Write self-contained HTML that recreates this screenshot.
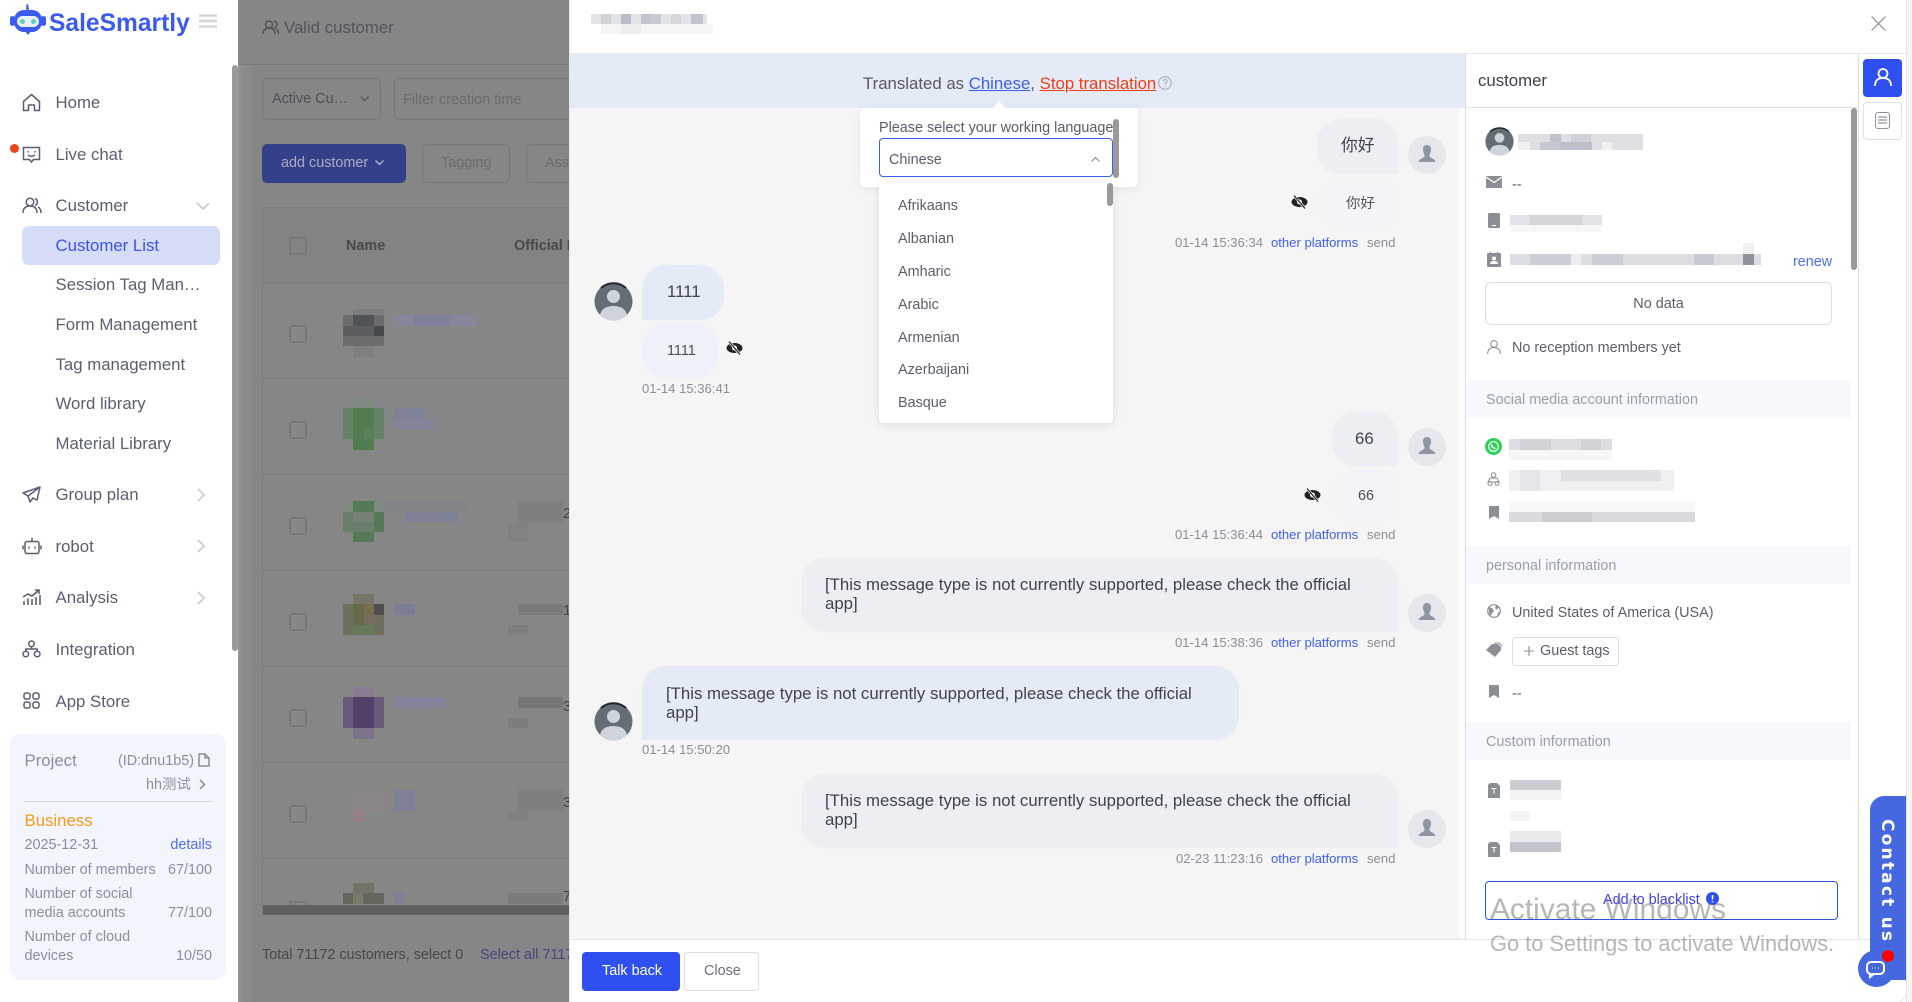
<!DOCTYPE html>
<html><head><meta charset="utf-8"><title>SaleSmartly</title>
<style>
*{box-sizing:border-box}
html,body{margin:0;padding:0;width:1912px;height:1002px;overflow:hidden;background:#fff;font-family:"Liberation Sans","Noto Sans CJK SC",sans-serif}
.t{position:absolute;white-space:nowrap;line-height:20px;font-size:16.8px;color:#5a5f6e;margin-top:1px}
.b{position:absolute}
.s{font-size:14.4px}
svg{position:absolute;overflow:visible}
.bub{position:absolute;box-shadow:0 0 8px rgba(0,0,0,.015)}
.r1{background:#eceef3;border-radius:24px 24px 0 24px}
.r2{background:#f3f4f7;border-radius:24px}
.l1{background:#e5eaf7;border-radius:24px 24px 24px 0}
.l2{background:#eef1fa;border-radius:24px}
.msg{font-size:16.8px;line-height:18.500px;color:#3f434c;position:absolute;white-space:nowrap}
.meta{position:absolute;white-space:nowrap;font-size:13.09px;line-height:16px;color:#8a8e98}
.blue{color:#3f5ef0}
.sec{position:absolute;left:1466px;width:385px;height:38px;background:#f6f8fe;font-size:14.4px;line-height:40px;color:#9a9ea8;padding-left:20px}
.opt{position:absolute;left:898px;font-size:14.4px;line-height:20px;color:#5a5e6a;margin-top:2px}
</style></head><body>

<!-- sidebar -->
<div class="b" style="left:0;top:0;width:238px;height:1002px;background:#fff"></div>
<svg style="left:8px;top:3px" width="42" height="34" viewBox="0 0 42 34">
<path d="M19 4.500q1-1.500 0-3" fill="none" stroke="#3a5af0" stroke-width="2"/>
<circle cx="19.500" cy="5.500" r="1.500" fill="#3a5af0"/>
<rect x="6" y="7" width="28" height="22" rx="10" fill="#3a5af0"/>
<path d="M17 28l3 4 3-4z" fill="#3a5af0"/>
<rect x="2" y="13" width="5" height="10" rx="2.500" fill="#3a5af0"/>
<rect x="33" y="13" width="5" height="10" rx="2.500" fill="#3a5af0"/>
<rect x="9" y="13" width="22" height="11" rx="5.500" fill="#e8f1fb"/>
<circle cx="14.500" cy="18.500" r="2.500" fill="#5fd0c0"/><circle cx="25.500" cy="18.500" r="2.500" fill="#5fd0c0"/>
</svg>
<div class="t" style="left:49px;top:9px;font-size:24.6px;line-height:28px;font-weight:bold;color:#3a5af0">SaleSmartly</div>
<svg style="left:199px;top:14px" width="18" height="14"><path d="M0 1.500h18M0 7h18M0 12.500h18" stroke="#d3d5da" stroke-width="2.500"/></svg>

<!-- nav icons -->
<svg style="left:22px;top:93px" width="19" height="19" viewBox="0 0 19 19" fill="none" stroke="#5a6070" stroke-width="1.500"><path d="M1.500 8.500L9.500 1.500l8 7V17.500h-5v-5.500h-6v5.500h-5z" stroke-linejoin="round"/></svg>
<div class="b" style="left:10px;top:144px;width:9px;height:9px;border-radius:50%;background:#f0431a"></div>
<svg style="left:22px;top:146px" width="19" height="18" viewBox="0 0 19 18" fill="none" stroke="#5a6070" stroke-width="1.500"><path d="M1.500 1.500h16v12h-6l-2 2.500-2-2.500h-6z"/><path d="M6 5v1.500M13 5v1.500"/><path d="M6 9q3.500 2.500 7 0"/></svg>
<svg style="left:22px;top:197px" width="20" height="17" viewBox="0 0 20 17" fill="none" stroke="#5a6070" stroke-width="1.500"><circle cx="8" cy="5" r="3.800"/><path d="M1 16q0-7 7-7t7 7"/><path d="M13 1.500a3.800 3.800 0 0 1 0 7M16 10q3 1.500 3 6"/></svg>
<svg style="left:22px;top:486px" width="19" height="18" viewBox="0 0 19 18" fill="none" stroke="#5a6070" stroke-width="1.500"><path d="M18 1L1 7l5 3 2 6 3-4 4 2z" stroke-linejoin="round"/><path d="M6 10L18 1"/></svg>
<svg style="left:22px;top:537px" width="20" height="18" viewBox="0 0 20 18" fill="none" stroke="#5a6070" stroke-width="1.500"><rect x="3" y="4.500" width="14" height="12" rx="2"/><path d="M10 4.500V1M1 8.500v4M19 8.500v4"/><path d="M7 9.500v2M13 9.500v2"/></svg>
<svg style="left:22px;top:589px" width="19" height="17" viewBox="0 0 19 17" fill="none" stroke="#5a6070" stroke-width="1.600"><path d="M1 8l5-3 4 2 7-6M13 1h4v4"/><path d="M2 16v-4M6 16V9.500M10 16v-6M14 16V8M18 16V6"/></svg>
<svg style="left:22px;top:640px" width="19" height="18" viewBox="0 0 19 18" fill="none" stroke="#5a6070" stroke-width="1.500"><circle cx="9.500" cy="3.800" r="2.800"/><circle cx="3.800" cy="14" r="2.800"/><circle cx="15.200" cy="14" r="2.800"/><path d="M9.500 6.500V9M3.800 11.500V9h11.400v2.500"/></svg>
<svg style="left:23px;top:692px" width="17" height="17" viewBox="0 0 17 17" fill="none" stroke="#5a6070" stroke-width="1.500"><rect x="1" y="1" width="6" height="6" rx="2"/><rect x="10" y="1" width="6" height="6" rx="2"/><rect x="1" y="10" width="6" height="6" rx="2"/><rect x="10" y="10" width="6" height="6" rx="2"/></svg>

<div class="t" style="left:55.500px;top:92px">Home</div>
<div class="t" style="left:55.500px;top:144px">Live chat</div>
<div class="t" style="left:55.500px;top:195px">Customer</div>
<svg style="left:196px;top:202px" width="14" height="8" fill="none" stroke="#c9ccd3" stroke-width="1.800"><path d="M1 1l6 6 6-6"/></svg>
<div class="b" style="left:22px;top:226px;width:198px;height:39px;background:#d6ddf8;border-radius:7px"></div>
<div class="t" style="left:55.500px;top:235px;color:#3f51f0">Customer List</div>
<div class="t" style="left:55.500px;top:274px">Session Tag Man…</div>
<div class="t" style="left:55.500px;top:314px">Form Management</div>
<div class="t" style="left:55.500px;top:354px">Tag management</div>
<div class="t" style="left:55.500px;top:393px">Word library</div>
<div class="t" style="left:55.500px;top:433px">Material Library</div>
<div class="t" style="left:55.500px;top:484px">Group plan</div>
<div class="t" style="left:55.500px;top:536px">robot</div>
<div class="t" style="left:55.500px;top:587px">Analysis</div>
<div class="t" style="left:55.500px;top:639px">Integration</div>
<div class="t" style="left:55.500px;top:691px">App Store</div>
<svg style="left:197px;top:488px" width="8" height="14" fill="none" stroke="#c9ccd3" stroke-width="1.800"><path d="M1 1l6 6-6 6"/></svg>
<svg style="left:197px;top:539px" width="8" height="14" fill="none" stroke="#c9ccd3" stroke-width="1.800"><path d="M1 1l6 6-6 6"/></svg>
<svg style="left:197px;top:591px" width="8" height="14" fill="none" stroke="#c9ccd3" stroke-width="1.800"><path d="M1 1l6 6-6 6"/></svg>
<div class="b" style="left:232px;top:65px;width:6px;height:586px;background:#999;border-radius:3px"></div>

<!-- project card -->
<div class="b" style="left:10px;top:734px;width:216px;height:246px;background:#f2f5fe;border-radius:10px"></div>
<div class="t" style="left:24.500px;top:750px;color:#8a8f9c">Project</div>
<div class="t s" style="right:1718px;top:750px;color:#8a8f9c">(ID:dnu1b5)</div>
<svg style="left:198px;top:753px" width="12" height="14" fill="none" stroke="#8a8f9c" stroke-width="1.500"><path d="M1 1h6l4 4v8H1z"/><path d="M7 1v4h4"/></svg>
<div class="t s" style="left:146px;top:774px;color:#8a8f9c">hh测试</div>
<svg style="left:199px;top:779px" width="7" height="11" fill="none" stroke="#80848f" stroke-width="1.400"><path d="M1 1l4.500 4.500L1 10"/></svg>
<div class="b" style="left:24px;top:801px;width:188px;height:1px;background:#d5d8df"></div>
<div class="t" style="left:24.500px;top:810px;color:#f59a16">Business</div>
<div class="t s" style="left:24.500px;top:834px;color:#8a8f9c">2025-12-31</div>
<div class="t s" style="right:1700px;top:834px;color:#4f6ef7">details</div>
<div class="t s" style="left:24.500px;top:859px;color:#8a8f9c">Number of members</div>
<div class="t s" style="right:1700px;top:859px;color:#8a8f9c">67/100</div>
<div class="t s" style="left:24.500px;top:883px;color:#8a8f9c">Number of social</div>
<div class="t s" style="left:24.500px;top:902px;color:#8a8f9c">media accounts</div>
<div class="t s" style="right:1700px;top:902px;color:#8a8f9c">77/100</div>
<div class="t s" style="left:24.500px;top:926px;color:#8a8f9c">Number of cloud</div>
<div class="t s" style="left:24.500px;top:945px;color:#8a8f9c">devices</div>
<div class="t s" style="right:1700px;top:945px;color:#8a8f9c">10/50</div>

<!-- dimmed page -->
<div class="b" style="left:238px;top:0;width:332px;height:1002px;background:linear-gradient(90deg,#95979a 0,#8b8c8e 4px,#888 12px,#868686 14px)"></div>
<div class="b" style="left:238px;top:0;width:332px;height:64px;background:#868686"></div>
<div class="b" style="left:238px;top:64px;width:332px;height:1px;background:#797979"></div>
<svg style="left:262px;top:20px" width="17" height="15" fill="none" stroke="#505358" stroke-width="1.400"><circle cx="7" cy="4.500" r="3.500"/><path d="M1 14q0-6 6-6t6 6"/><path d="M11.500 1a3.500 3.500 0 0 1 0 7M14 9q2.500 1.500 2.500 5"/></svg>
<div class="t" style="left:284px;top:17px;color:#505560">Valid customer</div>
<div class="b" style="left:262px;top:78px;width:119px;height:42px;border:1px solid #787878;border-radius:5px"></div>
<div class="t s" style="left:272px;top:88px;color:#4e5159">Active Cu…</div>
<svg style="left:360px;top:96px" width="9" height="6" fill="none" stroke="#4e5159" stroke-width="1.200"><path d="M.5.500l4 4 4-4"/></svg>
<div class="b" style="left:394px;top:78px;width:200px;height:42px;border:1px solid #787878;border-radius:5px"></div>
<div class="t s" style="left:403px;top:89px;color:#6c6c6c">Filter creation time</div>
<div class="b" style="left:262px;top:144px;width:144px;height:39px;background:#344088;border-radius:5px"></div>
<div class="t s" style="left:281px;top:152px;color:#a9acc3">add customer</div>
<svg style="left:375px;top:160px" width="9" height="6" fill="none" stroke="#b9bcd0" stroke-width="1.300"><path d="M.5.500l4 4 4-4"/></svg>
<div class="b" style="left:422px;top:144px;width:88px;height:39px;border:1px solid #787878;border-radius:5px"></div>
<div class="t s" style="left:441px;top:152px;color:#6e6e6e">Tagging</div>
<div class="b" style="left:526px;top:144px;width:88px;height:39px;border:1px solid #787878;border-radius:5px"></div>
<div class="t s" style="left:545px;top:152px;color:#6e6e6e">Assign</div>

<div class="b" style="left:262px;top:207px;width:320px;height:709px;border:1px solid #7d7d7d;border-bottom:0"></div>
<div class="b" style="left:263px;top:208px;width:320px;height:75px;background:#838383"></div>
<div class="b" style="left:262px;top:283px;width:320px;height:1px;background:#7c7c7c"></div>
<div class="b" style="left:262px;top:378px;width:320px;height:1px;background:#7c7c7c"></div>
<div class="b" style="left:262px;top:474px;width:320px;height:1px;background:#7c7c7c"></div>
<div class="b" style="left:262px;top:570px;width:320px;height:1px;background:#7c7c7c"></div>
<div class="b" style="left:262px;top:666px;width:320px;height:1px;background:#7c7c7c"></div>
<div class="b" style="left:262px;top:762px;width:320px;height:1px;background:#7c7c7c"></div>
<div class="b" style="left:262px;top:858px;width:320px;height:1px;background:#7c7c7c"></div>
<div class="b" style="left:289px;top:237px;width:18px;height:18px;border:2px solid #777;border-radius:3px"></div>
<div class="t s" style="left:346px;top:235px;font-weight:bold;color:#4a4a4a">Name</div>
<div class="t s" style="left:514px;top:235px;font-weight:bold;color:#4a4a4a">Official IDs</div>
<div class="b" style="left:289px;top:325px;width:18px;height:18px;border:2px solid #777;border-radius:3px"></div>
<div class="b" style="left:289px;top:421px;width:18px;height:18px;border:2px solid #777;border-radius:3px"></div>
<div class="b" style="left:289px;top:517px;width:18px;height:18px;border:2px solid #777;border-radius:3px"></div>
<div class="b" style="left:289px;top:613px;width:18px;height:18px;border:2px solid #777;border-radius:3px"></div>
<div class="b" style="left:289px;top:709px;width:18px;height:18px;border:2px solid #777;border-radius:3px"></div>
<div class="b" style="left:289px;top:805px;width:18px;height:18px;border:2px solid #777;border-radius:3px"></div>
<div class="b" style="left:289px;top:901px;width:18px;height:4px;border:2px solid #777;border-bottom:0"></div>

<svg style="left:0;top:0" width="600" height="920">
<!-- row 1 -->
<g><rect x="353" y="309" width="31" height="6" fill="#7c7c7c"/><rect x="343" y="315" width="41" height="31" fill="#6a6c6e"/><rect x="353" y="315" width="21" height="11" fill="#505357"/><rect x="343" y="326" width="31" height="10" fill="#5b5d61"/><rect x="374" y="326" width="10" height="10" fill="#46494d"/><rect x="353" y="346" width="21" height="11" fill="#7e7e7e"/><rect x="394" y="315" width="83" height="11" fill="#85869a"/><rect x="414" y="315" width="35" height="11" fill="#7e8099"/></g>
<!-- row 2 -->
<g><rect x="353" y="398" width="21" height="10" fill="#7f8a80"/><rect x="343" y="408" width="41" height="31" fill="#668267"/><rect x="353" y="408" width="21" height="42" fill="#527d53"/><rect x="364" y="429" width="10" height="10" fill="#5a8259"/><rect x="394" y="408" width="31" height="11" fill="#7f8198"/><rect x="394" y="419" width="42" height="10" fill="#83849a"/></g>
<!-- row 3 -->
<g><rect x="353" y="501" width="21" height="41" fill="#567a57"/><rect x="343" y="512" width="41" height="20" fill="#6a806c"/><rect x="353" y="512" width="21" height="10" fill="#748375"/><rect x="374" y="512" width="10" height="20" fill="#567a58"/><rect x="343" y="501" width="10" height="11" fill="#7e8a80"/><rect x="374" y="501" width="10" height="11" fill="#7e8a80"/><rect x="384" y="501" width="83" height="11" fill="#828389"/><rect x="405" y="512" width="52" height="10" fill="#7e8096"/><rect x="518" y="501" width="45" height="21" fill="#7f7f7f"/><rect x="508" y="522" width="20" height="20" fill="#818181"/></g>
<!-- row 4 -->
<g><rect x="353" y="594" width="21" height="10" fill="#777568"/><rect x="343" y="604" width="41" height="31" fill="#6f6f5f"/><rect x="353" y="604" width="21" height="31" fill="#66694a"/><rect x="364" y="604" width="10" height="11" fill="#7a6e4e"/><rect x="374" y="604" width="10" height="11" fill="#4f4f4f"/><rect x="364" y="615" width="10" height="10" fill="#786c5c"/><rect x="353" y="625" width="21" height="10" fill="#657a58"/><rect x="394" y="604" width="21" height="11" fill="#7b7d94"/><rect x="518" y="604" width="45" height="11" fill="#7a7a7a"/><rect x="508" y="625" width="20" height="10" fill="#7e7e7e"/></g>
<!-- row 5 -->
<g><rect x="353" y="687" width="21" height="10" fill="#887c90"/><rect x="343" y="697" width="41" height="31" fill="#675a7a"/><rect x="353" y="697" width="21" height="31" fill="#524069"/><rect x="353" y="728" width="21" height="11" fill="#7c7388"/><rect x="394" y="697" width="52" height="11" fill="#83849a"/><rect x="518" y="697" width="45" height="11" fill="#767676"/><rect x="508" y="718" width="20" height="10" fill="#7d7d7d"/></g>
<!-- row 6 -->
<g><rect x="353" y="790" width="31" height="21" fill="#8c8689"/><rect x="353" y="811" width="10" height="10" fill="#977f88"/><rect x="394" y="790" width="21" height="21" fill="#7e8099"/><rect x="518" y="790" width="45" height="21" fill="#7e807e"/><rect x="508" y="811" width="20" height="10" fill="#808080"/></g>
<!-- row 7 -->
<g><rect x="353" y="883" width="21" height="10" fill="#757268"/><rect x="343" y="893" width="41" height="11" fill="#65675f"/><rect x="353" y="893" width="10" height="11" fill="#7a7a68"/><rect x="394" y="893" width="10" height="11" fill="#7f8098"/><rect x="508" y="893" width="55" height="11" fill="#7b7b7b"/></g>
</svg>
<div class="t s" style="left:563px;top:503px;color:#444">25</div>
<div class="t s" style="left:563px;top:600px;color:#444">1</div>
<div class="t s" style="left:563px;top:696px;color:#444">32</div>
<div class="t s" style="left:563px;top:792px;color:#444">30</div>
<div class="t s" style="left:563px;top:886px;color:#444">75</div>
<div class="b" style="left:263px;top:905px;width:320px;height:10px;background:#5f5f5f"></div>
<div class="t s" style="left:262px;top:944px;color:#47484e">Total 71172 customers, select 0</div>
<div class="t s" style="left:480px;top:944px;color:#45487e">Select all 71172</div>

<!-- modal -->
<div class="b" style="left:570px;top:0;width:1336px;height:1002px;background:#fff;border-radius:0 0 10px 0;box-shadow:0 0 0 1px #e6e6e6"></div>
<div class="b" style="left:1906px;top:0;width:6px;height:1002px;background:#f5f5f5;border-left:1px solid #e6e6e6"></div>
<svg style="left:591px;top:12px" width="140" height="24">
<rect x="0" y="2" width="116" height="10" fill="#e2e3e7"/><rect x="10" y="2" width="10" height="10" fill="#d0d2d8"/><rect x="30" y="2" width="10" height="10" fill="#b9bcc5"/><rect x="50" y="2" width="10" height="10" fill="#c0c3cb"/><rect x="60" y="2" width="10" height="10" fill="#c8cad1"/><rect x="80" y="2" width="10" height="10" fill="#d5d7dc"/><rect x="100" y="2" width="12" height="10" fill="#c0c3cb"/><rect x="10" y="12" width="112" height="10" fill="#f5f5f7"/><rect x="30" y="12" width="20" height="10" fill="#eeeef1"/>
</svg>
<svg style="left:1871px;top:16px" width="15" height="15" fill="none" stroke="#8e8e8e" stroke-width="1.200"><path d="M.5.500l14 14M14.500.500l-14 14"/></svg>
<div class="b" style="left:570px;top:53px;width:1336px;height:1px;background:#e6e6e8"></div>

<!-- chat -->
<div class="b" style="left:570px;top:54px;width:896px;height:885px;background:#f5f5f5"></div>
<div class="b" style="left:1459px;top:108px;width:7px;height:831px;background:#fbfbfb"></div>
<div class="b" style="left:570px;top:54px;width:896px;height:54px;background:#e5eaf7"></div>
<div class="t" style="left:863px;top:73px;color:#555a64">Translated as <u style="color:#3f5ef0">Chinese</u>, <u style="color:#f23c14">Stop translation</u></div>
<svg style="left:1158px;top:76px" width="14" height="14" fill="none" stroke="#a5a8af" stroke-width="1"><circle cx="7" cy="7" r="6.300"/><path d="M5 5.500q.3-2 2.100-2 2 0 2 1.800c0 1.500-2 1.500-2 3.200M7.100 10v1"/></svg>

<!-- message 1 -->
<div class="bub r1" style="left:1317px;top:119px;width:81px;height:55px"></div>
<div class="msg" style="left:1341px;top:137px">你好</div>
<div class="bub r2" style="left:1320px;top:180px;width:78px;height:51px"></div>
<div class="msg" style="left:1346px;top:195px;font-size:14.4px;color:#555">你好</div>
<svg style="left:1291px;top:195px" width="17" height="14" viewBox="0 0 17 14"><ellipse cx="8.500" cy="7" rx="8" ry="5" fill="#222"/><circle cx="8.500" cy="7" r="2.500" fill="#f5f5f5"/><path d="M3 .5L14 13.500" stroke="#f5f5f5" stroke-width="2.600"/><path d="M3 .5L14 13.500" stroke="#222" stroke-width="1.200"/></svg>
<div class="meta" style="left:1175px;top:235px">01-14 15:36:34</div><div class="meta blue" style="left:1271px;top:235px">other platforms</div><div class="meta" style="left:1367px;top:235px">send</div>

<!-- message 2 -->
<svg style="left:594px;top:282px" width="39" height="39" viewBox="0 0 39 39"><circle cx="19.500" cy="19.500" r="19" fill="#646c76"/><path d="M7 6a19 19 0 0 1 25 0" fill="none" stroke="#1e2730" stroke-width="2"/><circle cx="19.500" cy="14.500" r="6.500" fill="#cfd3da"/><path d="M6 33q2-9 13.500-9T33 33q-6 5.700-13.500 5.700T6 33z" fill="#cfd3da"/></svg>
<div class="bub l1" style="left:642px;top:265px;width:82px;height:55px"></div>
<div class="msg" style="left:667px;top:283px">1111</div>
<div class="bub l2" style="left:642px;top:324px;width:77px;height:54px"></div>
<div class="msg" style="left:667px;top:342px;font-size:14.4px;color:#4a4e56">1111</div>
<svg style="left:726px;top:341px" width="17" height="14" viewBox="0 0 17 14"><ellipse cx="8.500" cy="7" rx="8" ry="5" fill="#222"/><circle cx="8.500" cy="7" r="2.500" fill="#f5f5f5"/><path d="M3 .5L14 13.500" stroke="#f5f5f5" stroke-width="2.600"/><path d="M3 .5L14 13.500" stroke="#222" stroke-width="1.200"/></svg>
<div class="meta" style="left:642px;top:381px">01-14 15:36:41</div>

<!-- message 3 -->
<div class="bub r1" style="left:1332px;top:412px;width:66px;height:54px"></div>
<div class="msg" style="left:1355px;top:430px">66</div>
<div class="bub r2" style="left:1335px;top:470px;width:63px;height:53px"></div>
<div class="msg" style="left:1358px;top:487px;font-size:14.4px;color:#4a4e56">66</div>
<svg style="left:1304px;top:488px" width="17" height="14" viewBox="0 0 17 14"><ellipse cx="8.500" cy="7" rx="8" ry="5" fill="#222"/><circle cx="8.500" cy="7" r="2.500" fill="#f5f5f5"/><path d="M3 .5L14 13.500" stroke="#f5f5f5" stroke-width="2.600"/><path d="M3 .5L14 13.500" stroke="#222" stroke-width="1.200"/></svg>
<div class="meta" style="left:1175px;top:527px">01-14 15:36:44</div><div class="meta blue" style="left:1271px;top:527px">other platforms</div><div class="meta" style="left:1367px;top:527px">send</div>

<!-- message 4 -->
<div class="bub r1" style="left:801px;top:558px;width:597px;height:74px"></div>
<div class="msg" style="left:825px;top:576px">[This message type is not currently supported, please check the official<br>app]</div>
<div class="meta" style="left:1175px;top:635px">01-14 15:38:36</div><div class="meta blue" style="left:1271px;top:635px">other platforms</div><div class="meta" style="left:1367px;top:635px">send</div>

<!-- message 5 -->
<svg style="left:594px;top:702px" width="39" height="39" viewBox="0 0 39 39"><circle cx="19.500" cy="19.500" r="19" fill="#646c76"/><path d="M7 6a19 19 0 0 1 25 0" fill="none" stroke="#1e2730" stroke-width="2"/><circle cx="19.500" cy="14.500" r="6.500" fill="#cfd3da"/><path d="M6 33q2-9 13.500-9T33 33q-6 5.700-13.500 5.700T6 33z" fill="#cfd3da"/></svg>
<div class="bub l1" style="left:642px;top:666px;width:597px;height:74px"></div>
<div class="msg" style="left:666px;top:685px">[This message type is not currently supported, please check the official<br>app]</div>
<div class="meta" style="left:642px;top:742px">01-14 15:50:20</div>

<!-- message 6 -->
<div class="bub r1" style="left:801px;top:774px;width:597px;height:74px"></div>
<div class="msg" style="left:825px;top:792px">[This message type is not currently supported, please check the official<br>app]</div>
<div class="meta" style="left:1176px;top:851px">02-23 11:23:16</div><div class="meta blue" style="left:1271px;top:851px">other platforms</div><div class="meta" style="left:1367px;top:851px">send</div>

<!-- person avatars -->
<svg style="left:1408px;top:136px" width="38" height="38" viewBox="0 0 38 38"><circle cx="19" cy="19" r="19" fill="#e5e7ec"/><path d="M19 9c3 0 4.200 2.200 4 5-.2 2.500-1.500 4-1.500 6 0 2 5.500 2.500 6 6H10.500c.5-3.500 6-4 6-6 0-2-1.300-3.500-1.500-6-.2-2.800 1-5 4-5z" fill="#8f96a3"/></svg>
<svg style="left:1408px;top:428px" width="38" height="38" viewBox="0 0 38 38"><circle cx="19" cy="19" r="19" fill="#e5e7ec"/><path d="M19 9c3 0 4.200 2.200 4 5-.2 2.500-1.500 4-1.500 6 0 2 5.500 2.500 6 6H10.500c.5-3.500 6-4 6-6 0-2-1.300-3.500-1.500-6-.2-2.800 1-5 4-5z" fill="#8f96a3"/></svg>
<svg style="left:1408px;top:594px" width="38" height="38" viewBox="0 0 38 38"><circle cx="19" cy="19" r="19" fill="#e5e7ec"/><path d="M19 9c3 0 4.200 2.200 4 5-.2 2.500-1.500 4-1.500 6 0 2 5.500 2.500 6 6H10.500c.5-3.500 6-4 6-6 0-2-1.300-3.500-1.500-6-.2-2.800 1-5 4-5z" fill="#8f96a3"/></svg>
<svg style="left:1408px;top:810px" width="38" height="38" viewBox="0 0 38 38"><circle cx="19" cy="19" r="19" fill="#e5e7ec"/><path d="M19 9c3 0 4.200 2.200 4 5-.2 2.500-1.500 4-1.500 6 0 2 5.500 2.500 6 6H10.500c.5-3.500 6-4 6-6 0-2-1.300-3.500-1.500-6-.2-2.800 1-5 4-5z" fill="#8f96a3"/></svg>

<!-- popover -->
<div class="b" style="left:860px;top:108px;width:278px;height:79px;background:#fff;border-radius:5px;box-shadow:0 2px 10px rgba(0,0,0,.06)"></div>
<svg style="left:992px;top:101px" width="14" height="8"><path d="M0 8L7 0l7 8z" fill="#fff"/></svg>
<div class="t s" style="left:879px;top:117px;color:#5a5e6a">Please select your working language</div>
<div class="b" style="left:879px;top:138px;width:234px;height:39px;border:1px solid #3f5ef0;border-radius:4px;background:#fff"></div>
<div class="t s" style="left:889px;top:149px;color:#5a5e6a">Chinese</div>
<svg style="left:1091px;top:156px" width="9" height="6" fill="none" stroke="#8a8e98" stroke-width="1.200"><path d="M.5 5.500l4-4 4 4"/></svg>
<div class="b" style="left:1113px;top:119px;width:6px;height:59px;background:#999;border-radius:3px"></div>
<div class="b" style="left:879px;top:183px;width:234px;height:240px;background:#fff;border-radius:4px;box-shadow:0 2px 10px rgba(0,0,0,.1)"></div>
<div class="b" style="left:1107px;top:183px;width:6px;height:23px;background:#999;border-radius:3px"></div>
<div class="opt" style="top:194px">Afrikaans</div>
<div class="opt" style="top:227px">Albanian</div>
<div class="opt" style="top:260px">Amharic</div>
<div class="opt" style="top:293px">Arabic</div>
<div class="opt" style="top:326px">Armenian</div>
<div class="opt" style="top:358px">Azerbaijani</div>
<div class="opt" style="top:391px">Basque</div>

<!-- footer -->
<div class="b" style="left:570px;top:939px;width:1300px;height:1px;background:#e3e3e5"></div>
<div class="b" style="left:582px;top:952px;width:98px;height:39px;background:#2f4ff0;border-radius:4px"></div>
<div class="t s" style="left:602px;top:960px;color:#fff">Talk back</div>
<div class="b" style="left:684px;top:952px;width:75px;height:39px;background:#fff;border:1px solid #dcdde1;border-radius:4px"></div>
<div class="t s" style="left:704px;top:960px;color:#6a6e78">Close</div>

<!-- customer panel -->
<div class="b" style="left:1465px;top:54px;width:1px;height:885px;background:#dcdde0"></div>
<div class="b" style="left:1466px;top:54px;width:392px;height:885px;background:#fff"></div>
<div class="b" style="left:1858px;top:54px;width:1px;height:885px;background:#dcdde0"></div>
<div class="b" style="left:1466px;top:107px;width:392px;height:1px;background:#dfe0e3"></div>
<div class="t" style="left:1478px;top:70px;color:#3d4048">customer</div>
<div class="b" style="left:1851px;top:108px;width:6px;height:162px;background:#999;border-radius:3px"></div>

<div class="b" style="left:1863px;top:59px;width:39px;height:38px;background:#2f4ff0;border-radius:4px"></div>
<svg style="left:1874px;top:68px" width="18" height="19" fill="none" stroke="#fff" stroke-width="1.800"><circle cx="9" cy="5.500" r="4.500"/><path d="M1 18q0-8 8-8t8 8"/></svg>
<div class="b" style="left:1863px;top:102px;width:39px;height:38px;border:1px solid #dfe0e3;border-radius:4px"></div>
<svg style="left:1875px;top:112px" width="15" height="17" fill="none" stroke="#8e929c" stroke-width="1"><rect x=".5" y=".5" width="14" height="16" rx="2.500"/><path d="M3 5h9M3 8h9M3 11h9" stroke-width="1.200"/></svg>

<svg style="left:1485px;top:127px" width="29" height="29" viewBox="0 0 39 39"><circle cx="19.500" cy="19.500" r="19" fill="#646c76"/><path d="M7 6a19 19 0 0 1 25 0" fill="none" stroke="#1e2730" stroke-width="2"/><circle cx="19.500" cy="14.500" r="6.500" fill="#cfd3da"/><path d="M6 33q2-9 13.500-9T33 33q-6 5.700-13.500 5.700T6 33z" fill="#cfd3da"/></svg>

<svg style="left:1466px;top:108px" width="392" height="831">
<!-- name mosaic -->
<rect x="52" y="26" width="125" height="16" fill="#dddfe3"/><rect x="84" y="26" width="11" height="8" fill="#bfc2ca"/><rect x="105" y="26" width="20" height="8" fill="#cfd1d7"/><rect x="52" y="34" width="12" height="8" fill="#eeeff1"/><rect x="74" y="34" width="20" height="8" fill="#c5c8cf"/><rect x="94" y="34" width="32" height="8" fill="#bdc0c9"/><rect x="136" y="34" width="10" height="8" fill="#f0f0f2"/>
<rect x="44" y="107" width="92" height="10" fill="#e2e3e7"/><rect x="64" y="107" width="52" height="10" fill="#d3d5d9"/><rect x="44" y="117" width="92" height="7" fill="#f7f7f8"/>
<rect x="44" y="146" width="251" height="11" fill="#dcdde1"/><rect x="64" y="146" width="41" height="11" fill="#cbced4"/><rect x="126" y="146" width="31" height="11" fill="#cbced4"/><rect x="228" y="146" width="20" height="11" fill="#c8cad1"/><rect x="105" y="146" width="10" height="11" fill="#eceded"/><rect x="277" y="135" width="11" height="11" fill="#f0f0f1"/><rect x="277" y="146" width="11" height="11" fill="#8f9298"/>
<rect x="43" y="331" width="103" height="11" fill="#dcdde1"/><rect x="54" y="331" width="31" height="11" fill="#d0d2d7"/><rect x="115" y="331" width="20" height="11" fill="#d0d2d7"/><rect x="43" y="342" width="103" height="10" fill="#f6f6f7"/>
<rect x="43" y="362" width="165" height="21" fill="#f0f0f2"/><rect x="95" y="362" width="100" height="11" fill="#dfe0e4"/><rect x="54" y="362" width="20" height="21" fill="#e4e5e8"/>
<rect x="43" y="404" width="186" height="10" fill="#d8dadf"/><rect x="76" y="404" width="50" height="10" fill="#cbcdd3"/><rect x="43" y="393" width="186" height="11" fill="#f7f7f8"/>
<rect x="44" y="672" width="51" height="10" fill="#cbcdd3"/><rect x="44" y="682" width="51" height="10" fill="#f3f3f5"/><rect x="44" y="703" width="20" height="10" fill="#f5f5f7"/><rect x="44" y="723" width="51" height="11" fill="#e8e9eb"/><rect x="44" y="734" width="51" height="10" fill="#c2c4cb"/>
</svg>

<svg style="left:1486px;top:176px" width="16" height="12"><path d="M0 0h16v12H0z" fill="#8b8e94"/><path d="M0 1l8 5.500L16 1" fill="none" stroke="#fff" stroke-width="1.300"/></svg>
<div class="t s" style="left:1512px;top:174px;color:#5a5e6a">--</div>
<svg style="left:1488px;top:213px" width="12" height="15"><rect width="12" height="15" rx="1.500" fill="#8b8e94"/><path d="M4 12.500h4" stroke="#fff"/></svg>
<svg style="left:1487px;top:252px" width="14" height="15"><rect y="1" width="14" height="14" rx="1.500" fill="#8b8e94"/><path d="M3.500 0v3M10.500 0v3" stroke="#8b8e94" stroke-width="1.500"/><circle cx="7" cy="6.500" r="2" fill="#fff"/><path d="M3 12q0-3 4-3t4 3z" fill="#fff"/></svg>
<div class="t s" style="left:1793px;top:251px;color:#4f6ef7">renew</div>
<div class="b" style="left:1485px;top:282px;width:347px;height:43px;border:1px solid #dcdde1;border-radius:6px;text-align:center;font-size:14.4px;line-height:43px;color:#5a5e6a">No data</div>
<svg style="left:1487px;top:340px" width="14" height="14" fill="none" stroke="#8b8e94" stroke-width="1.100"><circle cx="7" cy="4" r="3.300"/><path d="M.7 14q0-6.500 6.300-6.500T13.300 14"/></svg>
<div class="t s" style="left:1512px;top:337px;color:#5a5e6a">No reception members yet</div>

<div class="sec" style="top:380px">Social media account information</div>
<svg style="left:1485px;top:438px" width="17" height="17" viewBox="0 0 17 17"><circle cx="8.500" cy="8.500" r="8.500" fill="#2cd25a"/><circle cx="8.500" cy="8.500" r="4.800" fill="none" stroke="#fff" stroke-width="1.200"/><path d="M6.500 6q0 4 4 4.500" fill="none" stroke="#fff" stroke-width="1.400"/></svg>
<svg style="left:1487px;top:472px" width="13" height="14" fill="none" stroke="#8b8e94" stroke-width="1"><circle cx="6.500" cy="3" r="2.300"/><path d="M3 6h7l2 4H1z"/><circle cx="3" cy="11.500" r="2"/><circle cx="10" cy="11.500" r="2"/></svg>
<svg style="left:1489px;top:506px" width="10" height="13"><path d="M0 0h10v13L5 10l-5 3z" fill="#8b8e94"/></svg>

<div class="sec" style="top:546px">personal information</div>
<svg style="left:1487px;top:604px" width="14" height="14" viewBox="0 0 14 14"><circle cx="7" cy="7" r="6.300" fill="none" stroke="#8b8e94" stroke-width="1.200"/><path d="M2 3l3 1 2 3-2 2-1 3-2-3zM9 1.500l3 2-2 2-2-1zM11 8l1.500 1-2 3z" fill="#8b8e94"/></svg>
<div class="t s" style="left:1512px;top:602px;color:#5a5e6a">United States of America (USA)</div>
<svg style="left:1486px;top:643px" width="16" height="14" viewBox="0 0 16 14"><path d="M0 7L6 1h6l3 3v3l-6 7z" fill="#8b8e94"/><path d="M8 0h5l3 3" fill="none" stroke="#8b8e94"/></svg>
<div class="b" style="left:1512px;top:637px;width:107px;height:29px;border:1px solid #dcdde1;border-radius:3px"></div>
<svg style="left:1524px;top:646px" width="10" height="10"><path d="M5 0v10M0 5h10" stroke="#8b8e94" stroke-width="1.100"/></svg>
<div class="t s" style="left:1540px;top:640px;color:#5a5e6a">Guest tags</div>
<svg style="left:1489px;top:685px" width="10" height="13"><path d="M0 0h10v13L5 10l-5 3z" fill="#8b8e94"/></svg>
<div class="t s" style="left:1512px;top:683px;color:#5a5e6a">--</div>

<div class="sec" style="top:722px">Custom information</div>
<svg style="left:1488px;top:783px" width="12" height="15"><path d="M2 0h7l3 3v12H0V2z" fill="#8b8e94"/><path d="M3.500 5.500h5M6 5.500v5" stroke="#fff" stroke-width="1.100"/></svg>
<svg style="left:1488px;top:842px" width="12" height="15"><path d="M2 0h7l3 3v12H0V2z" fill="#8b8e94"/><path d="M3.500 5.500h5M6 5.500v5" stroke="#fff" stroke-width="1.100"/></svg>

<div class="b" style="left:1485px;top:881px;width:353px;height:39px;border:1px solid #3050e0;border-radius:4px;background:#fff"></div>
<div class="t s" style="left:1603px;top:889px;color:#3f3ff0">Add to blacklist</div>
<svg style="left:1706px;top:892px" width="13" height="13"><circle cx="6.500" cy="6.500" r="6.500" fill="#2f4ff0"/><path d="M6.500 3v4.500M6.500 9v1.300" stroke="#fff" stroke-width="1.500"/></svg>

<!-- contact widget -->
<div class="b" style="left:1870px;top:796px;width:36px;height:184px;background:#4567e0;border-radius:14px 0 0 0"></div>
<div class="b" style="left:1874px;top:819px;width:26px;height:125px;writing-mode:vertical-rl;font-family:'DejaVu Sans',sans-serif;font-weight:bold;font-size:17px;line-height:26px;letter-spacing:2.200px;color:#fff;white-space:nowrap">Contact us</div>
<div class="b" style="left:1858px;top:950px;width:37px;height:37px;border-radius:50%;background:#4567e0"></div>
<svg style="left:1866px;top:961px" width="20" height="17" fill="none" stroke="#fff" stroke-width="2"><rect x="1" y="1" width="17" height="12" rx="4"/><path d="M6 7h.5M9.200 7h.5M12.500 7h.5" stroke-width="2"/><path d="M4 13l0 3 4-3"/></svg>
<div class="b" style="left:1882px;top:950px;width:12px;height:12px;border-radius:50%;background:#f00"></div>

<!-- activation watermark -->
<div class="b" style="left:1490px;top:892px;font-size:29.900px;line-height:36px;color:rgba(110,110,110,.5);white-space:nowrap">Activate Windows</div>
<div class="b" style="left:1490px;top:931px;font-size:21.800px;line-height:26px;color:rgba(110,110,110,.5);white-space:nowrap">Go to Settings to activate Windows.</div>
</body></html>
